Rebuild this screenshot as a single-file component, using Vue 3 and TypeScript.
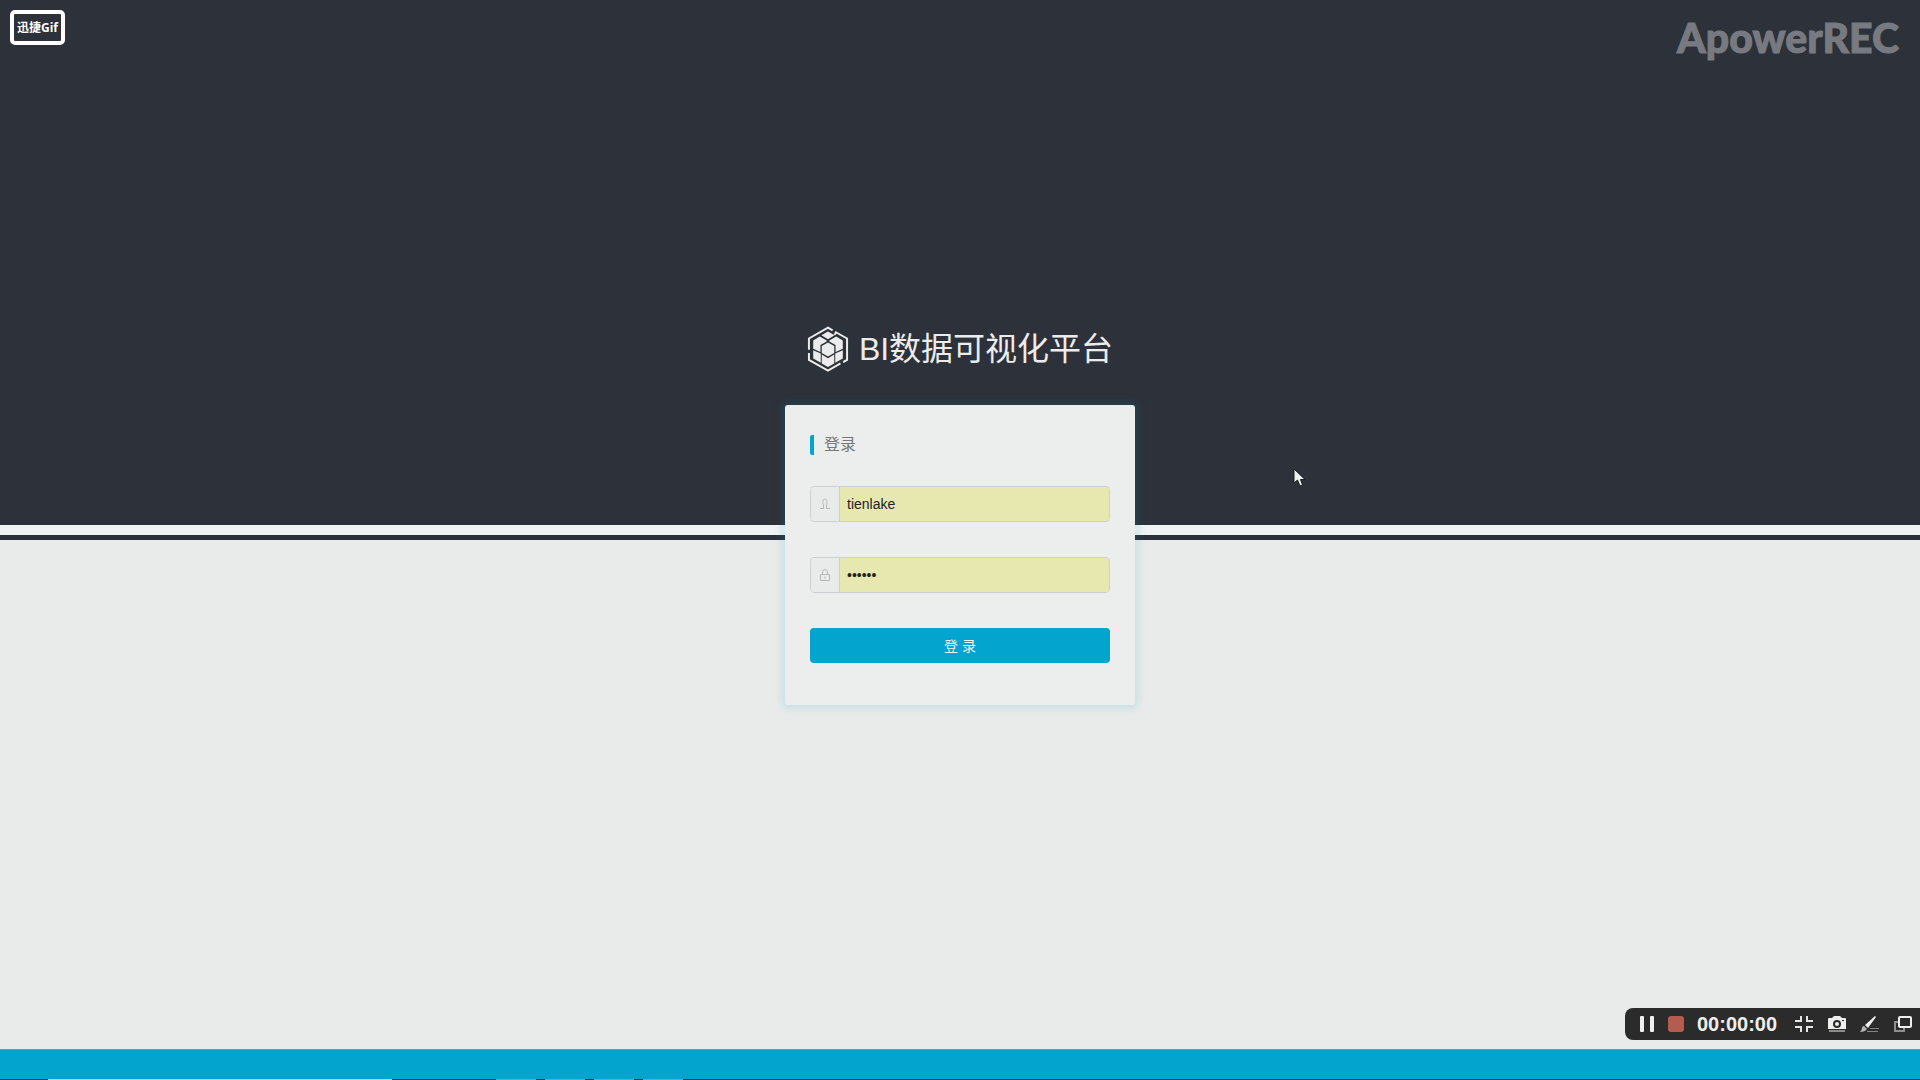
<script setup lang="ts">
import { ref } from 'vue'

const username = ref('tienlake')
const password = ref('123456')
const elapsed = ref('00:00:00')
</script>

<template>
  <div class="page">
    <main class="main">
      <h1 class="brand">
        <svg class="logo" viewBox="16 10 124 140" aria-hidden="true">
          <g fill="none" stroke="#ececec" stroke-width="6">
            <path d="M92 23 78 15 20 48V82" />
            <path d="M20 92V113L78 146 116 124" />
            <path d="M124 120 136 113V48L102 29 98 37" />
          </g>
          <g fill="#ececec">
            <path d="M78 27 98 38 78 50 58 38Z" />
            <path d="M53 42 74 54 74 57 55 68V89L33 79V54Z" />
            <path d="M103 42 82 54 82 57 101 68V89L123 79V54Z" />
            <path d="M78 60 97 71V92L78 103 59 92V71Z" />
            <path d="M33 84 56 94V122L33 109Z" />
            <path d="M123 84 100 94V122L123 109Z" />
            <path d="M59 97 78 108 97 97V124L78 135 59 124Z" />
          </g>
        </svg>
        <span>BI数据可视化平台</span>
      </h1>

      <form class="card" @submit.prevent>
        <h2 class="heading">登录</h2>
        <div class="field">
          <label for="username" aria-label="用户名">
            <svg width="12" height="12" viewBox="0 0 12 12" fill="none" stroke="#b4b8b9">
              <path d="M4.500 9V7C3.500 5 3.500 1 6 1s2.500 4 1.500 6v2M1 10.500h3.500V9M11 10.500H7.500V9" />
            </svg>
          </label>
          <input id="username" v-model="username" type="text" autocomplete="off" />
        </div>
        <div class="field">
          <label for="password" aria-label="密码">
            <svg width="12" height="14" viewBox="0 0 12 14" fill="none" stroke="#b4b8b9">
              <path d="M1.500 6.500h9v6h-9zM3.500 6.500V4a2.500 2.500 0 0 1 5 0v2.500M6 8.500v2" />
            </svg>
          </label>
          <input id="password" v-model="password" type="password" autocomplete="off" />
        </div>
        <button class="submit" type="submit">登 录</button>
      </form>
    </main>

    <footer class="footer">
      <div class="taskbar"></div>
    </footer>

    <div class="badge">迅捷Gif</div>
    <div class="watermark">ApowerREC</div>

    <svg class="cursor" width="14" height="20" viewBox="0 0 14 20" aria-hidden="true">
      <path d="M1 1V15L4.500 12 7 18 9.500 17 7.500 11.500H12Z" fill="#f0f1f2" stroke="#1c1f24" />
    </svg>

    <div class="recorder">
      <button type="button" class="pause" aria-label="暂停">
        <svg width="14" height="16" viewBox="0 0 14 16" fill="#f0f0f0">
          <rect width="4" height="16" rx="1" />
          <rect x="10" width="4" height="16" rx="1" />
        </svg>
      </button>
      <button type="button" class="stop" aria-label="停止"></button>
      <time class="clock">{{ elapsed }}</time>
      <div class="tools">
        <button type="button" aria-label="退出全屏">
          <svg width="18" height="16" viewBox="0 0 18 16" fill="none" stroke="#e6e6e6" stroke-width="2">
            <path d="M0 5H6V0M12 0V5H18M0 11H6V16M12 16V11H18" />
          </svg>
        </button>
        <button type="button" aria-label="截图">
          <svg width="18" height="16" viewBox="0 0 18 16">
            <path d="M0 3Q0 2 1 2H4L6 0H12L14 2H17Q18 2 18 3V13H0Z" fill="#efefef" />
            <circle cx="9" cy="8" r="3" fill="#efefef" stroke="#2b2b2b" stroke-width="2" />
            <path d="M14 4.500h2" stroke="#2b2b2b" />
            <path d="M1 15h16" stroke="#8a8d88" stroke-width="2" />
          </svg>
        </button>
        <button type="button" aria-label="画笔">
          <svg width="19" height="17" viewBox="0 0 19 17">
            <path d="M15 0 16 1 8 12 5 9Z" fill="#efefef" />
            <path d="M4 10 7 13Q5 16 0 16 2 14 2 12 2 10 4 10" fill="#b5b5b5" />
            <path d="M10 12.500h9M7 15.500h11" stroke="#858585" />
          </svg>
        </button>
        <button type="button" aria-label="窗口">
          <svg width="18" height="16" viewBox="0 0 18 16" fill="none">
            <path d="M4 6H1V15H10V12" stroke="#8f8f8f" stroke-width="2" />
            <rect x="5" y="1" width="12" height="10" rx="1" stroke="#efefef" stroke-width="2" />
          </svg>
        </button>
      </div>
    </div>
  </div>
</template>

<style>
body {
  margin: 0;
}
</style>

<style scoped>
.page {
  position: relative;
  display: flex;
  flex-direction: column;
  min-height: 100vh;
  overflow: hidden;
  font-family: "Liberation Sans", "Noto Sans CJK SC", sans-serif;
  background: linear-gradient(
    #2d3139 calc(50vh - 15px),
    #eff3f3 calc(50vh - 15px),
    #eff3f3 calc(50vh - 5px),
    #2d3139 calc(50vh - 5px),
    #2d3139 50vh,
    #e9ebea 50vh
  );
}

.main {
  flex: 1;
  display: flex;
  flex-direction: column;
  align-items: center;
  justify-content: center;
  padding-bottom: 20px;
}

.brand {
  display: flex;
  align-items: center;
  gap: 10px;
  margin: 0 0 32px;
  font-size: 32px;
  line-height: 48px;
  font-weight: 400;
  color: #ececec;
}

.logo {
  width: 42px;
  height: 46px;
}

.card {
  box-sizing: border-box;
  width: 350px;
  max-width: 100%;
  height: 300px;
  padding: 30px 25px;
  border-radius: 3px;
  background: #eceded;
  box-shadow: 0 0 10px 3px rgba(3, 164, 205, 0.16);
}

.heading {
  margin: 0 0 31px;
  padding-left: 10px;
  border-left: 4px solid #03a4cd;
  border-radius: 2px;
  font-size: 16px;
  line-height: 20px;
  font-weight: 400;
  color: #777;
}

.field {
  box-sizing: border-box;
  display: flex;
  height: 36px;
  margin-bottom: 35px;
  border: 1px solid #cdd0d2;
  border-radius: 4px;
  overflow: hidden;
}

.field label {
  display: flex;
  align-items: center;
  justify-content: center;
  width: 28px;
  border-right: 1px solid #cdd0d2;
  background: #e9ebeb;
}

.field input {
  flex: 1;
  min-width: 0;
  padding: 0 7px;
  border: 0;
  outline: 0;
  background: #e6e8b0;
  font: 14px "Liberation Sans", "Noto Sans CJK SC", sans-serif;
  color: #222;
}

.submit {
  display: block;
  width: 100%;
  height: 35px;
  padding: 0;
  border: 0;
  border-radius: 4px;
  background: #03a4cd;
  font: 14px "Liberation Sans", "Noto Sans CJK SC", sans-serif;
  color: #eef4f5;
}

.footer {
  box-sizing: border-box;
  height: 31px;
  border-top: 1px solid #4fa4b8;
  background: #03a4cd;
  display: flex;
  align-items: flex-end;
}

.taskbar {
  flex: 1;
  height: 1px;
  background: linear-gradient(
    90deg,
    #12414f 48px,
    #a0dbe8 48px 392px,
    #12414f 392px 496px,
    #4fb0cc 496px 536px,
    #12414f 536px 545px,
    #4fb0cc 545px 585px,
    #12414f 585px 594px,
    #4fb0cc 594px 634px,
    #12414f 634px 643px,
    #4fb0cc 643px 683px,
    #12414f 683px
  );
}

.badge {
  position: absolute;
  top: 10px;
  left: 10px;
  box-sizing: border-box;
  width: 55px;
  height: 35px;
  border: 4px solid #fff;
  border-radius: 5px;
  font: bold 12px/28px "Open Sans", "Noto Sans CJK SC", sans-serif;
  text-align: center;
  white-space: nowrap;
  color: #fff;
}

.watermark {
  position: absolute;
  top: 14px;
  right: 21px;
  font: 900 41px/48px Lato, sans-serif;
  color: #777b81;
  -webkit-text-stroke: 1px #777b81;
}

.cursor {
  position: absolute;
  top: 468px;
  left: 1293px;
}

.recorder {
  position: absolute;
  right: 0;
  bottom: 40px;
  box-sizing: border-box;
  display: flex;
  align-items: center;
  width: 295px;
  height: 32px;
  padding: 0 8px 0 15px;
  border-radius: 8px 0 0 8px;
  background: #2b2b2b;
}

.recorder button {
  display: block;
  padding: 0;
  border: 0;
  background: none;
}

.recorder svg {
  display: block;
}

.recorder .stop {
  width: 16px;
  height: 16px;
  margin: 0 13px 0 14px;
  border-radius: 3px;
  background: #b55c50;
}

.clock {
  width: 82px;
  font: bold 20px/32px "Liberation Sans", sans-serif;
  white-space: nowrap;
  color: #efefef;
}

.tools {
  flex: 1;
  display: flex;
  justify-content: space-between;
  padding-left: 16px;
}
</style>
